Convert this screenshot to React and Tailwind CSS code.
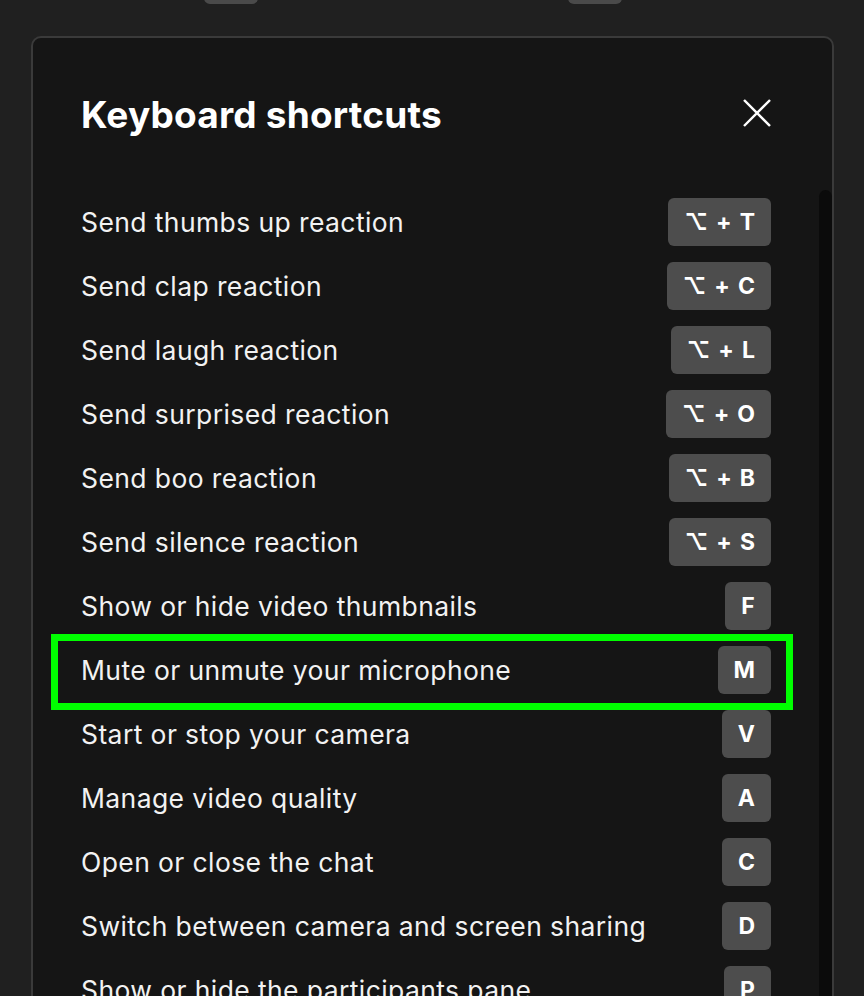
import React from 'react';

const shortcuts = [
  { label: 'Send thumbs up reaction', keys: ['⌥', '+', 'T'] },
  { label: 'Send clap reaction', keys: ['⌥', '+', 'C'] },
  { label: 'Send laugh reaction', keys: ['⌥', '+', 'L'] },
  { label: 'Send surprised reaction', keys: ['⌥', '+', 'O'] },
  { label: 'Send boo reaction', keys: ['⌥', '+', 'B'] },
  { label: 'Send silence reaction', keys: ['⌥', '+', 'S'] },
  { label: 'Show or hide video thumbnails', keys: ['F'] },
  { label: 'Mute or unmute your microphone', keys: ['M'], highlight: true },
  { label: 'Start or stop your camera', keys: ['V'] },
  { label: 'Manage video quality', keys: ['A'] },
  { label: 'Open or close the chat', keys: ['C'] },
  { label: 'Switch between camera and screen sharing', keys: ['D'] },
  { label: 'Show or hide the participants pane', keys: ['P'] },
  { label: 'Raise or lower your hand', keys: ['R'] },
];

const Keycap = ({ keys }) => (
  <span className="flex h-[48px] min-w-[46px] items-center justify-center gap-[8px] rounded-[6px] bg-[#4d4d4d] px-[16px] text-[23px] font-bold text-white">
    {keys.map((k, i) => (
      <span key={i}>{k}</span>
    ))}
  </span>
);

const App = () => {
  return (
    <div
      className="relative h-[996px] w-[864px] overflow-hidden bg-[#202020] text-white"
      style={{ fontFamily: 'Inter, "DejaVu Sans", sans-serif' }}
    >
      {/* keycaps from the page behind */}
      <div className="flex h-[4px] overflow-hidden">
        <div className="ml-[204px] -mt-[40px] h-[44px] w-[54px] rounded-[6px] bg-[#4a4a4a]" />
        <div className="ml-[310px] -mt-[40px] h-[44px] w-[54px] rounded-[6px] bg-[#4a4a4a]" />
      </div>

      <div className="relative ml-[31px] mt-[32px] flex h-[1100px] w-[803px] flex-col rounded-[10px] border-2 border-[#3a3a3a] bg-[#151515]">
        <div className="flex h-[152px] shrink-0 items-start justify-between pl-[48px] pr-[61px] pt-[57px]">
          <h2 className="text-[37px] font-bold leading-[40px] tracking-[0.2px]">Keyboard shortcuts</h2>
          <button className="mt-[4px] flex h-[28px] w-[28px] items-center justify-center">
            <svg width="30" height="30" viewBox="0 0 30 30" fill="none" stroke="white" strokeWidth="2.6" strokeLinecap="square">
              <path d="M2 2L28 28M28 2L2 28" />
            </svg>
          </button>
        </div>

        <div className="flex flex-1">
          <div className="flex-1 pl-[48px] pr-[48px]">
            {shortcuts.map((s) => (
              <div key={s.label} className="relative flex h-[64px] items-center justify-between">
                <span className="text-[26.5px] leading-[32px] tracking-[0.4px] text-[#f2f2f2]">{s.label}</span>
                <Keycap keys={s.keys} />
                {s.highlight && (
                  <div className="absolute -left-[30px] -right-[22px] -top-[4px] -bottom-[8px] border-[7px] border-[#00ff00]" />
                )}
              </div>
            ))}
          </div>
          <div className="w-[13px] rounded-t-[7px] bg-[#0b0b0b]" />
        </div>
      </div>
    </div>
  );
};

export default App;
